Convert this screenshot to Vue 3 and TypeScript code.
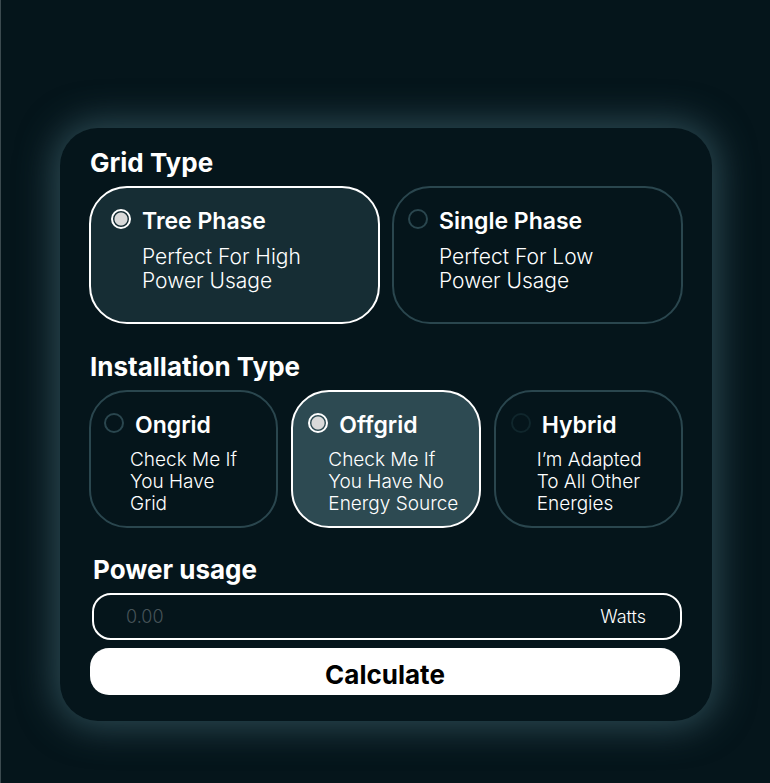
<script setup lang="ts">
import { ref } from 'vue'

interface Option {
  id: string
  title: string
  text: string
}

const gridTypes: Option[] = [
  { id: 'three', title: 'Tree Phase', text: 'Perfect For High\nPower Usage' },
  { id: 'single', title: 'Single Phase', text: 'Perfect For Low\nPower Usage' },
]

const installationTypes: Option[] = [
  { id: 'ongrid', title: 'Ongrid', text: 'Check Me If\nYou Have\nGrid' },
  { id: 'offgrid', title: 'Offgrid', text: 'Check Me If\nYou Have No\nEnergy Source' },
  { id: 'hybrid', title: 'Hybrid', text: 'I’m Adapted\nTo All Other\nEnergies' },
]

const gridType = ref('three')
const installation = ref('offgrid')
const power = ref('')
</script>

<template>
  <main class="page">
    <form class="panel" @submit.prevent>
      <fieldset class="group">
        <legend class="heading">Grid Type</legend>
        <div class="options options--grid">
          <label
            v-for="o in gridTypes"
            :key="o.id"
            class="option"
            :class="[`option--${o.id}`, { 'option--on': gridType === o.id }]"
          >
            <input v-model="gridType" class="radio" type="radio" name="grid" :value="o.id" />
            <span class="title">{{ o.title }}</span>
            <span class="text">{{ o.text }}</span>
          </label>
        </div>
      </fieldset>

      <fieldset class="group group--last">
        <legend class="heading">Installation Type</legend>
        <div class="options options--install">
          <label
            v-for="o in installationTypes"
            :key="o.id"
            class="option"
            :class="[`option--${o.id}`, { 'option--on': installation === o.id }]"
          >
            <input v-model="installation" class="radio" type="radio" name="installation" :value="o.id" />
            <span class="title">{{ o.title }}</span>
            <span class="text">{{ o.text }}</span>
          </label>
        </div>
      </fieldset>

      <div class="usage">
        <label class="heading" for="power">Power usage</label>
        <div class="field">
          <input id="power" v-model="power" class="field-input" type="text" inputmode="decimal" placeholder="0.00" />
          <span class="unit">Watts</span>
        </div>
      </div>

      <button class="submit" type="submit">Calculate</button>
    </form>
  </main>
</template>

<style>
body {
  background: #05151b;
}
</style>

<style scoped>
.page {
  box-sizing: border-box;
  min-height: 100vh;
  padding: 128px 58px 62px 59px;
  border-left: 1px solid #3c4a4f;
  background: #05151b;
  color: #fff;
  font-family: Inter, "Liberation Sans", sans-serif;
}

.panel {
  display: flex;
  flex-direction: column;
  padding: 19px 29px 26px;
  border-radius: 38px;
  background: #05151b;
  box-shadow: 0 0 36px 6px #2d4b54;
}

.group {
  min-width: 0;
  margin: 0 0 27px;
  padding: 0;
  border: 0;
}

.group--last {
  margin-bottom: 26px;
}

.heading {
  display: block;
  padding: 0 0 7px 1px;
  font-size: 26px;
  font-weight: 700;
  line-height: 32px;
}

.options {
  display: grid;
  gap: 12px;
}

.options--grid {
  grid-template-columns: repeat(2, 1fr);
}

.options--install {
  grid-template-columns: repeat(3, 1fr);
  gap: 13px;
}

.option {
  box-sizing: border-box;
  display: grid;
  grid-template-columns: 20px 1fr;
  grid-template-rows: 28px 1fr;
  column-gap: 11px;
  row-gap: 11px;
  min-height: 138px;
  padding: 18px 0 9px 14px;
  border: 2px solid #2a464e;
  border-radius: 38px;
  cursor: pointer;
}

.option--three {
  padding-left: 20px;
}

.option--on {
  border-color: #fff;
  background: #2d4a52;
}

.option--three.option--on {
  background: #162d34;
}

.options--install .option {
  column-gap: 11px;
  padding-left: 15px;
}

.options--install .option--ongrid {
  padding-left: 13px;
}

.radio {
  appearance: none;
  box-sizing: border-box;
  width: 20px;
  height: 20px;
  margin: 3px 0 0;
  border: 2px solid #2a464e;
  border-radius: 50%;
}

.radio:checked {
  border-color: #fff;
  background: radial-gradient(circle, #d9d9d9 6px, transparent 7px);
}

.option--hybrid .radio {
  border-color: #10262c;
}

.title {
  font-size: 23px;
  font-weight: 600;
  line-height: 30px;
}

.text {
  grid-column: 2;
  font-size: 21px;
  font-weight: 300;
  line-height: 24px;
  white-space: pre;
}

.options--install .text {
  grid-column: 1 / -1;
  margin-left: 26px;
  font-size: 19px;
  line-height: 22px;
}

.options--install .option--offgrid .text {
  margin-left: 20px;
}

.usage {
  padding: 0 1px 0 3px;
}

.field {
  box-sizing: border-box;
  display: flex;
  align-items: center;
  height: 47px;
  padding: 0 34px 1px 32px;
  border: 2px solid #fff;
  border-radius: 19px;
  font-size: 18px;
  font-weight: 300;
}

.field-input {
  flex: 1;
  min-width: 0;
  padding: 0;
  border: 0;
  outline: 0;
  background: none;
  color: #fff;
  font: inherit;
}

.field-input::placeholder {
  color: #465358;
  opacity: 1;
}

.submit {
  height: 47px;
  margin: 8px 3px 0 1px;
  padding: 6px 0 0;
  border: 0;
  border-radius: 19px;
  background: #fff;
  color: #000;
  font: inherit;
  font-size: 26px;
  font-weight: 700;
  line-height: 32px;
  cursor: pointer;
}
</style>
